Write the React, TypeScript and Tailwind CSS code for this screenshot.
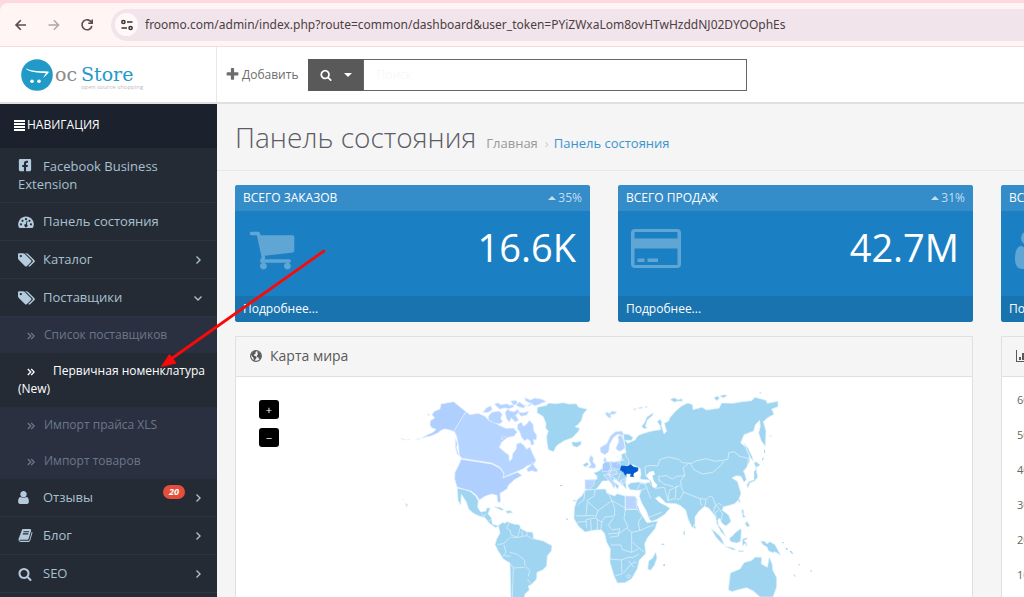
import { FaFacebookSquare } from "react-icons/fa";
import type { ReactNode } from "react";

const glyphs = {
  user: "M1536 1399q0 109-62.5 187t-150.5 78h-854q-88 0-150.5-78t-62.5-187q0-85 8.5-160.5t31.5-152 58.5-131 94-89 134.5-34.5q131 128 313 128t313-128q76 0 134.5 34.5t94 89 58.5 131 31.5 152 8.5 160.5zm-256-887q0 159-112.5 271.5t-271.5 112.5-271.5-112.5-112.5-271.5 112.5-271.5 271.5-112.5 271.5 112.5 112.5 271.5z",
  cart: "M704 1536q0 52-38 90t-90 38-90-38-38-90 38-90 90-38 90 38 38 90zm896 0q0 52-38 90t-90 38-90-38-38-90 38-90 90-38 90 38 38 90zm128-1088v512q0 24-16.5 42.5t-40.5 21.5l-1044 122q13 60 13 70 0 16-24 64h920q26 0 45 19t19 45-19 45-45 19h-1024q-26 0-45-19t-19-45q0-11 8-31.5t16-36 21.5-40 15.5-29.5l-177-823h-204q-26 0-45-19t-19-45 19-45 45-19h256q16 0 28.5 6.5t19.5 15.5 13 24.5 8 26 5.5 29.5 4.5 26h1201q26 0 45 19t19 45z",
  search: "M1216 832q0-185-131.5-316.5t-316.5-131.5-316.5 131.5-131.5 316.5 131.5 316.5 316.5 131.5 316.5-131.5 131.5-316.5zm512 832q0 52-38 90t-90 38q-54 0-90-38l-343-342q-179 124-399 124-143 0-273.5-55.5t-225-150-150-225-55.5-273.5 55.5-273.5 150-225 225-150 273.5-55.5 273.5 55.5 225 150 150 225 55.5 273.5q0 220-124 399l343 343q37 37 37 90z",
  plus: "M1600 736v192q0 40-28 68t-68 28h-416v416q0 40-28 68t-68 28h-192q-40 0-68-28t-28-68v-416h-416q-40 0-68-28t-28-68v-192q0-40 28-68t68-28h416v-416q0-40 28-68t68-28h192q40 0 68 28t28 68v416h416q40 0 68 28t28 68z",
  tags: "M448 448q0-53-37.5-90.5t-90.5-37.5-90.5 37.5-37.5 90.5 37.5 90.5 90.5 37.5 90.5-37.5 37.5-90.5zm1067 576q0 53-37 90l-491 492q-39 37-91 37-53 0-90-37l-715-716q-38-37-64.5-101t-26.5-117v-416q0-52 38-90t90-38h416q53 0 117 26.5t102 64.5l715 714q37 39 37 91zm384 0q0 53-37 90l-491 492q-39 37-91 37-36 0-59-14t-53-45l470-470q37-37 37-90 0-52-37-91l-715-714q-38-38-102-64.5t-117-26.5h224q53 0 117 26.5t102 64.5l715 714q37 39 37 91z",
  book: "M1703 478q40 57 18 129l-275 906q-19 64-76.5 107.5t-122.5 43.5h-923q-77 0-148.5-53.5t-99.5-131.5q-24-67-2-127 0-4 3-27t4-37q1-8-3-21.5t-3-19.5q2-11 8-21t16.5-23.5 16.5-23.5q23-38 45-91.5t30-91.5q3-10 .5-30t-.5-28q3-11 17-28t17-23q21-36 42-92t25-90q1-9-2.5-32t.5-28q4-13 22-30.5t22-22.5q19-26 42.5-84.5t27.5-96.5q1-8-3-25.5t-2-26.5q2-8 9-18t18-23 17-21q8-12 16.5-30.5t15-35 16-36 19.5-32 26.5-23.5 36-11.5 47.5 5.5l-1 3q38-9 51-9h761q74 0 114 56t18 130l-274 906q-36 119-71.5 153.5t-128.5 34.5h-869q-27 0-38 15-11 16-1 43 24 70 144 70h923q29 0 56-15.5t35-41.5l300-987q7-22 5-57 38 15 59 43zm-1064 2q-4 13 2 22.5t20 9.5h608q13 0 25.5-9.5t16.5-22.5l21-64q4-13-2-22.5t-20-9.5h-608q-13 0-25.5 9.5t-16.5 22.5zm-83 256q-4 13 2 22.5t20 9.5h608q13 0 25.5-9.5t16.5-22.5l21-64q4-13-2-22.5t-20-9.5h-608q-13 0-25.5 9.5t-16.5 22.5z",
};

function Glyph({ name, className }: { name: keyof typeof glyphs; className: string }) {
  return (
    <svg viewBox={name === "tags" ? "0 0 1920 1792" : "0 0 1792 1792"} className={className} fill="currentColor" aria-hidden="true">
      <path d={glyphs[name]} />
    </svg>
  );
}

function Gauge() {
  return (
    <svg viewBox="0 0 16 14" className="h-3.5 w-4" aria-hidden="true">
      <path d="M8 1.5a7.8 7.8 0 0 0-7.2 10.8q.3.7 1 .7h12.4q.7 0 1-.7A7.8 7.8 0 0 0 8 1.5z" fill="currentColor" />
      <g fill="#242b35">
        <circle cx="3" cy="9.3" r="1.1" />
        <circle cx="4.5" cy="5.8" r="1.1" />
        <circle cx="8" cy="4.2" r="1.1" />
        <circle cx="11.5" cy="5.8" r="1.1" />
        <circle cx="13" cy="9.3" r="1.1" />
        <path d="M8.7 5.8l.9.2-.8 3.2a1.6 1.6 0 1 1-1-.2z" />
      </g>
    </svg>
  );
}

function Globe() {
  return (
    <svg viewBox="0 0 12 12" className="h-3 w-3" aria-hidden="true">
      <circle cx="6" cy="6" r="5.400" fill="none" stroke="currentColor" strokeWidth="1.100" />
      <path d="M1 4.500L3.200 1.500 5.600.8l.8 1-1.200.8.6 1-1.400.7-.6 1.200 1.400.6 1.600.8-.6 1.600-1 1-.3 1.700-1.200-.8-.3-2.600L2 6.300zM7.500 1.200l2.300 1.300 1.300 2.300-.4.8.5 1-1 1.800-1.200 1-.5-2-1.400-.5L6.900 5.200l1.200-.9-.6-1.200z" fill="currentColor" />
    </svg>
  );
}

function Chevron({ down = false }: { down?: boolean }) {
  return (
    <svg viewBox="0 0 10 10" className="h-2.5 w-2.5" fill="none" stroke="currentColor" strokeWidth="1.4" aria-hidden="true">
      <path d={down ? "M1.500 3.500L5 7l3.500-3.500" : "M3.500 1.500L7 5 3.500 8.500"} />
    </svg>
  );
}

function DoubleAngle() {
  return (
    <svg viewBox="0 0 8 8" className="mr-3 ml-[9px] inline-block h-2 w-2" fill="none" stroke="currentColor" strokeWidth="1.3" aria-hidden="true">
      <path d="M.8 1l3 3-3 3M4.2 1l3 3-3 3" />
    </svg>
  );
}

function BrowserBar() {
  return (
    <div className="bg-[#fdd8df] pt-[3px]">
      <div className="flex h-11 items-center rounded-tl-lg border-b border-[#f9d9dc] bg-[#fff5f4] pl-3.5">
        <div className="flex items-center gap-[19px] text-[#5f4b50]">
          <button aria-label="Назад" className="h-3.5 w-3.5">
            <svg viewBox="0 0 14 14" fill="none" stroke="currentColor" strokeWidth="1.6"><path d="M12 7H2M6.800 2.200L2 7l4.800 4.800" /></svg>
          </button>
          <button aria-label="Вперёд" className="h-3.5 w-3.5 text-[#b3a6a8]">
            <svg viewBox="0 0 14 14" fill="none" stroke="currentColor" strokeWidth="1.5"><path d="M1.500 7h10M6.800 2.200L11.600 7l-4.800 4.800" /></svg>
          </button>
          <button aria-label="Обновить" className="h-3.5 w-3.5">
            <svg viewBox="0 0 14 14" fill="none" stroke="currentColor" strokeWidth="1.6"><path d="M11.500 4.500A5 5 0 1 0 11.900 8M12.200 1.500v3.700H8.200" /></svg>
          </button>
        </div>
        <div className="ml-[17px] flex h-8 min-w-0 flex-1 items-center rounded-l-full bg-[#f1e5eb] pl-1">
          <button aria-label="Сведения о сайте" className="flex h-[23px] w-[23px] shrink-0 items-center justify-center rounded-full bg-[#fff8f8] text-[#3d3033]">
            <svg viewBox="0 0 12 12" className="h-3 w-3" fill="none" stroke="currentColor" strokeWidth="1.5"><circle cx="2.4" cy="3" r="1.6" /><path d="M6 3h5.5M.5 9H6" /><circle cx="9.6" cy="9" r="1.6" /></svg>
          </button>
          <input aria-label="Адрес" readOnly value="froomo.com/admin/index.php?route=common/dashboard&user_token=PYiZWxaLom8ovHTwHzddNJ02DYOOphEs" className="ml-[7px] min-w-0 flex-1 bg-transparent font-['Noto_Sans',sans-serif] text-[12px] text-[#4c4044] outline-none" />
        </div>
      </div>
    </div>
  );
}

function Logo() {
  return (
    <a href="#" className="flex h-full w-[217px] shrink-0 items-center border-r border-[#e8e8e8] pl-[21px]">
      <svg viewBox="0 0 32 32" className="h-8 w-8" aria-hidden="true">
        <circle cx="16" cy="16" r="15.8" fill="#229ac8" />
        <path d="M4.500 9.200c4.500 2.500 12 3 22.600 3.200 1 .1.800.9.200 1.600-1.700 2-3.600 3.600-5.200 5 .8-1.500 2-3.400 2.800-5C16.500 13.600 8 13.500 4.500 9.200z" fill="#fff" />
        <circle cx="11" cy="22.3" r="1.8" fill="#fff" />
        <circle cx="18" cy="22.3" r="1.8" fill="#fff" />
      </svg>
      <div className="ml-0.5 grid grid-cols-[26px_auto] pt-1.5 font-['DejaVu_Serif',serif] text-[19px] leading-[18px]">
        <span className="text-[#8a8a8a]">oc</span>
        <span className="text-[#229ac8]">Store</span>
        <span className="col-start-2 font-['Open_Sans',sans-serif] text-[6px] leading-2 text-[#bdbdbd]">open source shopping</span>
      </div>
    </a>
  );
}

function Header() {
  return (
    <header className="flex h-[57px] items-center border-b-2 border-[#e0e0e0] bg-white">
      <Logo />
      <a href="#" className="ml-2 flex items-center gap-0.5 text-[12px] text-[#6d6d6d]">
        <Glyph name="plus" className="h-[15px] w-[15px]" />
        Добавить
      </a>
      <form className="ml-[10px] flex h-8 w-[439px]">
        <button type="button" aria-label="Тип поиска" className="flex w-[55px] items-center justify-center gap-3 bg-[#595959] text-white">
          <Glyph name="search" className="h-3 w-3" />
          <svg viewBox="0 0 8 4" className="h-1 w-2" aria-hidden="true"><path d="M0 0h8L4 4z" fill="currentColor" /></svg>
        </button>
        <input aria-label="Поиск" placeholder="Поиск" className="min-w-0 flex-1 border border-[#666] bg-white px-3 text-[12px] outline-none placeholder:text-[#f8f8f8]" />
      </form>
    </header>
  );
}

function NavItem({ icon, label, arrow, badge }: { icon: ReactNode; label: string; arrow?: "right" | "down"; badge?: string }) {
  return (
    <li className="border-b border-[#2b3541]">
      <a href="#" className="flex h-[37px] items-center pr-3.5 pl-[18px]">
        <span className="w-[25px] shrink-0 text-[#b3cbdd]">{icon}</span>
        <span className="flex-1">{label}</span>
        {badge && <span className="mr-2 mb-3 rounded-full bg-[#e64e3c] px-1.5 text-[9px] leading-3.5 font-bold text-white italic">{badge}</span>}
        {arrow && <Chevron down={arrow === "down"} />}
      </a>
    </li>
  );
}

function SubItem({ label, active = false }: { label: string; active?: boolean }) {
  return (
    <li className={active ? "bg-[#242b35] text-white" : "text-[#6c7789]"}>
      <a href="#" className="block py-[9px] pr-2 pl-[18px] text-[12px] leading-[18px]">
        <DoubleAngle />
        <span className={active ? "ml-1.5" : "-ml-[3px]"}>{label}</span>
      </a>
    </li>
  );
}

function Sidebar() {
  return (
    <nav className="w-[217px] shrink-0 bg-[#242b35] text-[13px] text-[#a9c0d0]">
      <div className="flex h-11 items-center gap-0.5 bg-[#1b212d] pb-0.5 pl-3.5 text-[12px] text-white">
        <svg viewBox="0 0 11 11" className="h-[11px] w-[11px]" fill="currentColor" aria-hidden="true">
          <path d="M0 0h11v2H0zM0 3h11v2H0zM0 6h11v2H0zM0 9h11v2H0z" />
        </svg>
        НАВИГАЦИЯ
      </div>
      <ul>
        <li className="border-b border-[#2b3541]">
          <a href="#" className="block py-[9px] pr-10 pl-[18px] leading-[18px]">
            <FaFacebookSquare className="mr-[11px] inline-block h-3.5 w-3.5 align-[-1px] text-[#b3cbdd]" />
            Facebook Business Extension
          </a>
        </li>
        <NavItem icon={<Gauge />} label="Панель состояния" />
        <NavItem icon={<Glyph name="tags" className="h-4 w-[17px]" />} label="Каталог" arrow="right" />
        <NavItem icon={<Glyph name="tags" className="h-4 w-[17px]" />} label="Поставщики" arrow="down" />
        <li>
          <ul className="bg-[#2a3040]">
            <SubItem label="Список поставщиков" />
            <SubItem label="Первичная номенклатура (New)" active />
            <SubItem label="Импорт прайса XLS" />
            <SubItem label="Импорт товаров" />
          </ul>
        </li>
        <NavItem icon={<Glyph name="user" className="-ml-0.5 h-[15px] w-[15px]" />} label="Отзывы" arrow="right" badge="20" />
        <NavItem icon={<Glyph name="book" className="h-[15px] w-[15px]" />} label="Блог" arrow="right" />
        <NavItem icon={<Glyph name="search" className="h-3.5 w-3.5" />} label="SEO" arrow="right" />
      </ul>
    </nav>
  );
}

function Tile({ title, percent, value, icon }: { title: string; percent: string; value: string; icon: ReactNode }) {
  return (
    <section className="overflow-hidden rounded-[3px] bg-[#1b80c3] text-white">
      <div className="flex h-[26px] items-center justify-between bg-[#348dc9] px-2 text-[12px]">
        <h2>{title}</h2>
        <span className="flex items-center gap-0.5 text-[#c4deef]">
          <svg viewBox="0 0 8 4" className="h-1 w-2" aria-hidden="true"><path d="M0 4h8L4 0z" fill="currentColor" /></svg>
          {percent}
        </span>
      </div>
      <div className="flex h-[85px] justify-between pt-3 pr-3.5 pl-[13px]">
        <div className="text-[#60a6d5]">{icon}</div>
        <span className="text-[38px] leading-[48px]">{value}</span>
      </div>
      <a href="#" className="flex h-[26px] items-center bg-[#1973af] px-2 text-[12px]">Подробнее...</a>
    </section>
  );
}

function CreditCard() {
  return (
    <svg viewBox="0 0 50 50" className="h-[50px] w-[50px]" aria-hidden="true">
      <path fillRule="evenodd" fill="currentColor" d="M4 6h42q4 0 4 4v31q0 4-4 4H4q-4 0-4-4V10q0-4 4-4zM3.500 9v6.500h43V9zM3.500 25.500V42h43V25.500zM6.500 35.500h7V39h-7zM16.500 35.500h10.500V39H16.500z" />
    </svg>
  );
}

function Users() {
  return (
    <svg viewBox="0 0 60 50" className="h-[50px] w-[60px]" fill="currentColor" aria-hidden="true">
      <circle cx="14" cy="15" r="7" />
      <circle cx="34" cy="17" r="11" />
      <path d="M1 36c0-10 3-13 7-13 5 4 10 4 14 1 2 6 6 8 4 11-5 4-5 10-4 11H8q-7-1-7-10z" />
    </svg>
  );
}

function WorldMap() {
  return (
    <svg viewBox="236 378 736 400" className="block w-full" role="img" aria-label="Карта мира">
      <g transform="translate(390 380) scale(.33333)" fill="#a0d5f1" stroke="#e3f3fc" strokeWidth="2" strokeLinejoin="round">
        <g fill="#b5d4ff" stroke="#e9f2ff">
          <path fill="#afcfff" d="M133 97l17-7 3-15 38-7 37 30-36 60-9-4-18-4-10 3-12 9-20 9-30 6 37-18 8-8-13-5-5-8 1-13 13-8-8-10z" />
          <path d="M228 98l12 9 25-4 20 9 11 12 18 6 10 7 23 11 23-1 12 12-10 13-17 3-20 15-7 15 17 15 12 8 1 19 8-8 2-15 10-13 2-17 12-3 10 8 8 12 10-7 7 18 11 22-6 10-22 7-10 8-18 8-44 19 4-14-12-17-25-13-90-14-7-9-3-32-5-25-8-17z" />
          <path fill="#afcfff" d="M213 241l92 14 25 13 12 17-4 12 44-17 14 9-24 14-17 16-3 10-22 14 2 22-3 7-7-6-1-17-16-4-20 7-17 11-9-14-16-13-24-6-18-6-7-24 1-20 13-26z" />
          <path d="M278 100l12-14 12-6 5 12-14 9zM295 112l10-12 22-4 10 10-5 12 6 10-10 7-18-4-14-8zM313 75l10-4 10 6 18-3 10 6 5-4 7 7-14 6-16-2-14 4zM345 101l8-11 8 6 13 2 8-7 7 9-12 8 9 16-10 5-12-12-6 13-8-10zM362 66l16-2 6 9-13 6zM377 77l12-8 12 9 12 3 9-8 13 8 24-10 10-3-12-7-23-4-12 6-18-7 2 9 11 6 9 3-8 8-12-4-4 10-15-4zM383 99l16 2 18-4-7 12-17 3zM383 135l12-5 5 12 9-6 9-12 11 12 3 20 9 15-3 12-8-1 3 14-10 3-3-14-8-5-8 6-10-12-5-16-7-9zM333 178l8-6 9 4-8 8zM410 270l12-10 5-10 8 14 8 8-3 8-14-5-12 4z" />
          <path d="M196 178l6 15-2 14 7 22-5-2-6-22zM112 104l7 2-2 5zM77 181l12-3-1 3zM31 178l15 4-2 2zM51 182l8-1v2zM47 373l7 5-3 5-4-5zM37 361l6 5" />
        </g>
        <path d="M202 328l13 2 25 7 16 13 9 15-2 20 9 14 16-3 2-9h11l-7 17 11 14 2 18 18 4-7 6-18-11-15-19-18-5-18-9-13-12-8-23-14-21-2 33-8-15z" />
        <path d="M325 440l13-10 5 3 9-5 18 7 18 2 5 12 17 9 18 2 3 19 29 7 26 14-2 16-12 14-2 31-12 12-17 7-1 20-15 16-10 5 3 12-13 12-5 25h-37l-3-118-20-12-15-23-10-20 5-17 10-18z" />
        <path d="M442 85l28-6 5-7 22 2 23-3 16 4 23-1 6 10 27 7-12 13-6 21-11 13-8 5 14 5-3 8-19 20-26 10-21 14-10 18-15-6-4-21-1-20 5-15-8-8 1-14-8-21-19-12zM545 192l4-4 8 2 17-3-1 10-13 8-12-5zM312 383l18 2 13 8-8 1-15-7zM347 396l15-1 6 6-16 2zM336 369l6 12" />
        <g fill="none">
          <path d="M358 430l-8 18 10 5 3 15 20 7 5-20 4-12M396 456l1 16M412 460l-2 12M360 476l-18 17-20 5M342 498l6 21-8 11 22 2M360 520l22 6 22 17 1 17 14 14-4 19M362 555l8 12 35-2M370 567l-3 93M412 600l10 14M273 404l9 8M280 415l8-10M296 426l9-6M362 475l20 0 28-5 20 11" />
        </g>
      </g>
      <g transform="translate(560 380) scale(.33333)" fill="#a0d5f1" stroke="#dff1fb" strokeWidth="2" strokeLinejoin="round">
        <path d="M190 165l15 1 14 9-4 9-20 0 8 9 22-10 10-14 20-7 17-5 16-3 14-2-2-12-8-12 8-7 5 7-1 12 8 25 8-8-7-24 13-7 3-9 17-20 20-17 18-8 14 5 1 15 27-7 13 8 38-5 8-16 34 1 28-5 28-3 10-10 33 9 4 9 32-6v16l-19 7 7 16-19 10-13 12 8 28-2 46-12-16-8-24 5-20-2-18-13 13-5 19-29 11-10 25 14 11 11 25 2 19-10 20-8 10 4 10 4 15-7 8-9-18-15-2-12 7 16 10 5 16 6 20-7 19-12 12-20 6-14 3-3 11 19 14 7 20-15 13-12-8-7-16-6 6 2 15 12 15 11 21-15-16-13-25-3-20-9-11-11-14-14-6-16 15-12 16v22l-8 11-12-24-8-29-15-13-14-6-31-2-19-20-12 6 12 12 9 5 9 4 14 9-17 19-20 13-17 7-7-5-10-26-14-24-7-20 4-20-8 2-24-2-7-12 8-8 24-3 20 4 16-4-4-6-28-2 4-14-2-18-22-12-24 3-7 11 12 14 6 15-9 5 2 25-15-16-12-9-11-6-1 8 17 14-4 10-22-30-12 5-12 0-11 16-10 11-21-2 1-28 25-2v-10l-10-9 14-5 14-11 12-14 14-5 5 3 22-5 3-19 14-6-3-8z" />
        <path d="M75 334l30-3 32-1 3 12 24 9 7-7 24 7 30 1 7 9v15l12 28 17 27 32-5-8 23-23 28-8 17 3 30-19 19-6 26-17 30-20 12-23 1-10-22-12-40 1-40-11-20-6-26-9-11-20 0-30 6-20-18-13-22 1-32 8-24 16-14z" />
        <g fill="#b8d5ff">
          <path d="M122 220l-2-14 20-12 12-24 14-12 20-2 6 12-8 2-10-5-14 11-11 20-3 22-11 9zM168 206l8-17-2-17 10-5 7 17 5 22-13 10-12 0zM84 266l9-9-6-15 5-13 8 7-1 12 9 12-4 8zM75 302l29 1-2 15-15 15-12-3zM135 103l8-4 5 5 9-8 13 3-5 6-13 2 1 11-9-3z" />
          <path fill="#a7caff" d="M128 256l6-7 14-1 4 18-7 12-18-1zM154 250l25-2 4 20-12 3-17-5z" />
          <path d="M130 288l16-3 6 13 14 19-4 12-7-15-16-17zM147 274l20-1 6 11-14 5-16-4zM180 306l18-10-2 14-12 8zM196 351l29 1 7 18-4-3 3 24-35 0zM131 240l5-6 4 14-8 2z" />
        </g>
        <path d="M68 258l14-9 4 8-10 7zM245 142l8-10 8-18 19-13-2 8-16 14-6 18 6 6-10 2zM330 62l12-6 12 6 12-3 1 8-15-1-8 4zM462 57l10-6 7 6-9 8zM480 50l14-3 8 3-13 7zM220 91l8-3-1 5zM236 86l10-2 1 3-10 2zM254 83l9 0-6 3zM597 41l8-1-3 4zM552 193l12 15 12 24 4 15-9-12-9-20zM582 278l7-10-7-16 6-4 13 10-14 8 3 14 3 15-10 12-13 4-6 15-4-8 8-11 14-4zM536 362l4-1-1 12-4-6zM545 393l6-1 0 16 6 5-8 3zM555 434l6-7 9 14-9 2zM454 450l10 7 18 17 12 24-13-9-14-16zM508 478l9-7 8-9 17-13 2 6-2 32-12 5-18-4zM548 480l12-4 2 3-10 6 8 8 0 10-5-10-8 9zM495 502l18 3 16 6-10 2zM535 514l16 2-3 3-14-2zM602 486l12 1 7 8 8-7 15 8 8 14 10 18-18-10-7 3-12-6-4-11-12-7-4-5zM263 570l3-24 12-9 9-18 4 18-8 22-11 15zM402 437l5 8-3 5-4-6zM505 632l6-50 29-12 12-19 24-7 10-10 19 1-1 20 18 10 6-31 9 23 1 15 12 24 0 28-11 30h-39l-20-18-20-10-28 7-16 5z" />
        <g fill="#fff" stroke="none">
          <path d="M257 290l12-12 12-2 4 10-8 4 5 17 10 11-4 8-10-1-5-18zM198 300l6-14 9 3 8 4 4-5 17 11 5 8-13-2-30 3zM152 240l11-6 4-22 8 2-2 16 13 2-1 6-22 5z" />
          <path d="M228 366l12 20 18 34 6 9-6-2-20-34z" />
        </g>
        <path fill="#0059cf" stroke="#0059cf" d="M181 273l3-12 19 1 9-5 9 7 13 3-1 9-12 6-2 8 3 3-11-1 3-7-13-2-5 6-5-10z" />
        <g fill="none" stroke="#e8f5fc">
          <path d="M192 182l3 22 2 26 10 14-2 15M257 290l-2-27 18-4 20 2 7-20 25-7 32 7 9 10 28 2 16-8 28-6 28 8 38-6 2-20 17-3 16 14 26 6-3 26-13 12M298 310l-2-18 24-2 17 10 13-8 24-2-4-25 16-12M390 252l14 22 24 11 30-5 26-22 8-12M374 290l-12 15 2 14-16 5-2 35-22 5 4-30 24-12M340 323l-28-8-15-14M363 323l8 16-10 20-12 3M372 340l48 19 18 2 12-10 8 4 10 27-10 18M420 359l4 22M438 362l-3 20M460 386l16-13 9 6M472 381l16 24-5 18M476 395l-12 6 5 14M232 330l10-18 14 4 16 42M242 312l-4-14M256 316l7-8 22 20 28-3 12 42M236 352l8-18 12-6M262 418l22-10 20-8M170 258l18-18M172 245l22-2M155 268l-8 22 22 9 8 20M182 282l-9 22M168 232l22 8" />
          <path d="M75 334l-3 28-18 15M106 332l-4 20-22 13 34 30 42-30-14-28M82 370l-4 40-30 1M114 395l-8 22-28 5 2 24M78 410l26 0M106 417l18 12 10-14 30-5 0-22-8-22M156 365l40 22M195 350l1 44M196 390l-4 28 12 26-24 18-36 3M232 391l-37 0M232 392l15 18-12 20 4 25 22-10 22-7M239 455l-24 5-14-12M215 460l0 60-28-8-4-14-30 0M150 475l25-4 4-22-22 4-12-14 16-24M218 490l34 30M215 520l20-10M150 540l34 3 20-8 15 0 18-10M184 543l2 42-20 5M190 583l14-18 18-16 8 2M205 545l17 20M52 430l26-3M92 422l2 36M112 420l0 35M126 427l-4 28M190 320l-8-18M200 590q5-7 12 0-2 9-9 7z" />
        </g>
        <g fill="#a0d5f1" stroke="none">
          <path d="M606 240l5-6v5l-5 6zM627 170h8v2h-8zM612 212h3v10h-3zM665 489h5l3 4h-5zM676 506h5l3 6h-5zM688 516h6l6 8h-4zM700 584l4 3 4 8-5-4zM715 556h5v3h-5zM751 574h4v4h-4zM371 456h3v12h-3zM310 556h5v5h-5zM304 494h9v3h-9zM0 318h7v3H0zM20 415l4 8h-5zM40 364h7v3h-7zM-107 562h5v3h-5z" />
        </g>
      </g>
    </svg>
  );
}

function Panel({ title, icon, children }: { title: string; icon: ReactNode; children: ReactNode }) {
  return (
    <section className="col-span-2 border border-[#e0e0e0] bg-white">
      <h2 className="flex h-10 items-center gap-2 border-b border-[#e0e0e0] bg-[#f5f5f5] px-3.5 pb-0.5 text-[14px] text-[#595959]">
        {icon}
        {title}
      </h2>
      <div className="relative">{children}</div>
    </section>
  );
}

export default function App() {
  return (
    <div className="relative flex h-screen flex-col overflow-hidden bg-[#f5f5f5] font-['Open_Sans','Noto_Sans',sans-serif]">
      <BrowserBar />
      <Header />
      <div className="flex min-h-0 flex-1">
        <Sidebar />
        <main className="min-w-0 flex-1 overflow-hidden">
          <div className="flex h-[67px] items-baseline border-b border-[#e8e8e8] px-[18px] pt-3">
            <h1 className="text-[28px] leading-[42px] font-light text-[#5c5c66]">Панель состояния</h1>
            <nav aria-label="Путь" className="ml-2.5 flex gap-[7px] text-[13px] text-[#999]">
              <a href="#">Главная</a>
              <span className="text-[#ccc]">›</span>
              <a href="#" className="-ml-0.5 text-[#3b94cf]">Панель состояния</a>
            </nav>
          </div>
          <div className="grid grid-cols-[repeat(4,355px)] gap-x-7 gap-y-3.5 px-[18px] pt-3.5">
            <Tile title="ВСЕГО ЗАКАЗОВ" percent="35%" value="16.6K" icon={<Glyph name="cart" className="mt-0.5 h-12 w-12" />} />
            <Tile title="ВСЕГО ПРОДАЖ" percent="31%" value="42.7M" icon={<CreditCard />} />
            <Tile title="ВСЕГО" percent="" value="" icon={<Users />} />
            <span />
            <Panel title="Карта мира" icon={<Globe />}>
              <WorldMap />
              <div className="absolute top-[23px] left-[23px] flex flex-col gap-[9px]">
                <button aria-label="Увеличить" className="flex h-[19px] w-5 items-center justify-center rounded-[3px] bg-black text-[11px] leading-none text-white">+</button>
                <button aria-label="Уменьшить" className="flex h-[19px] w-5 items-center justify-center rounded-[3px] bg-black text-[11px] leading-none text-white">−</button>
              </div>
            </Panel>
            <Panel
              title=""
              icon={
                <svg viewBox="0 0 16 12" className="h-3 w-4" fill="currentColor" aria-hidden="true">
                  <path d="M0 0h1v11h15v1H0zM3 7h2v3H3zM6 3h2v7H6zM9 5h2v5H9zM12 2h2v8h-2z" />
                </svg>
              }
            >
              <div className="flex flex-col gap-[17px] pt-3.5 pl-[15px] text-[11px] leading-[18px] text-[#666]">
                <span>60</span>
                <span>50</span>
                <span>40</span>
                <span>30</span>
                <span>20</span>
                <span>10</span>
              </div>
            </Panel>
          </div>
        </main>
      </div>
      <svg viewBox="0 0 170 122" className="pointer-events-none absolute top-[247px] left-[159px] h-[122px] w-[170px]" aria-hidden="true">
        <path d="M165 4L12 112" stroke="#f90a0a" strokeWidth="2.8" strokeLinecap="round" />
        <path d="M2.500 119.500l8-12 6.500 8.500z" fill="#f90a0a" stroke="#f90a0a" />
      </svg>
    </div>
  );
}
